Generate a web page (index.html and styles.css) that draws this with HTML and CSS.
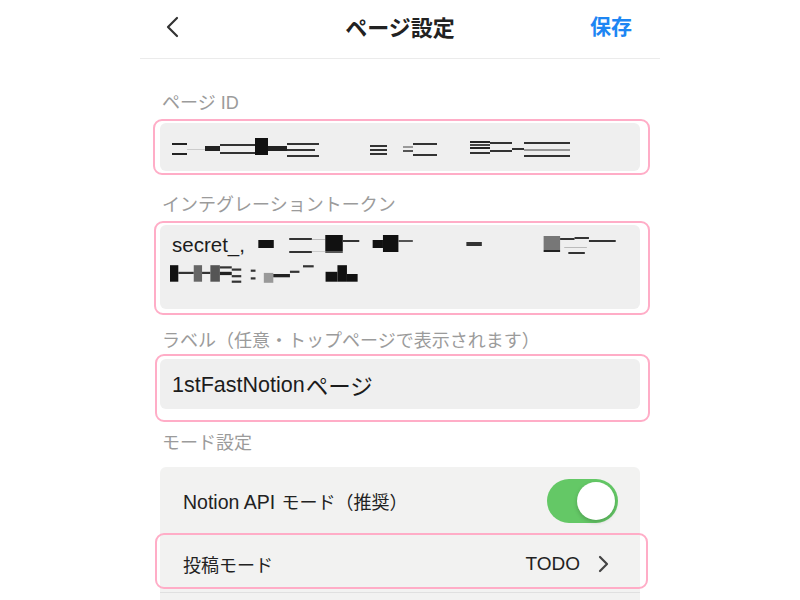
FILE: index.html
```html
<!DOCTYPE html>
<html lang="ja">
<head>
<meta charset="utf-8">
<title>ページ設定</title>
<link rel="stylesheet" href="styles.css">
</head>
<body>
<div class="screen">
  <header class="nav">
    <svg class="back" width="14" height="22" viewBox="0 0 14 22"><polyline points="12,2 3,11 12,20" fill="none" stroke="#333" stroke-width="2.2" stroke-linecap="round" stroke-linejoin="round"/></svg>
    <h1 class="title">ページ設定</h1>
    <span class="save">保存</span>
  </header>

  <main class="content">
    <div class="label label-first">ページ ID</div>
    <div class="mark mark-id">
      <div class="field field-id">
        <svg width="400" height="20" viewBox="0 0 400 20">
          <rect x="0" y="6" width="15" height="2" fill="#222"/><rect x="0" y="16" width="15" height="2" fill="#222"/>
          <rect x="15" y="12" width="18" height="1" fill="#ccc"/>
          <rect x="33" y="9" width="15" height="5" fill="#222"/>
          <rect x="48" y="7" width="35" height="2" fill="#333"/><rect x="48" y="15" width="35" height="2" fill="#333"/>
          <rect x="83" y="1" width="13" height="17" fill="#111"/>
          <rect x="96" y="9" width="19" height="5" fill="#222"/>
          <rect x="115" y="6" width="16" height="2" fill="#333"/><rect x="115" y="12" width="28" height="2" fill="#333"/><rect x="115" y="18" width="32" height="2" fill="#333"/>
          <rect x="131" y="6" width="16" height="2" fill="#333"/>
          <rect x="198" y="8" width="17" height="2" fill="#333"/><rect x="198" y="12" width="17" height="2" fill="#333"/><rect x="198" y="16" width="17" height="2" fill="#333"/>
          <rect x="231" y="9" width="10" height="2" fill="#999"/><rect x="231" y="13" width="10" height="2" fill="#555"/>
          <rect x="241" y="6" width="24" height="2" fill="#333"/><rect x="241" y="17" width="24" height="2" fill="#333"/>
          <rect x="298" y="4" width="20" height="2" fill="#222"/><rect x="298" y="7" width="20" height="2" fill="#444"/><rect x="298" y="10" width="20" height="2" fill="#222"/><rect x="298" y="15" width="20" height="2" fill="#333"/>
          <rect x="318" y="5" width="22" height="2" fill="#333"/><rect x="318" y="13" width="22" height="2" fill="#333"/>
          <rect x="340" y="11" width="12" height="2" fill="#333"/>
          <rect x="352" y="5" width="46" height="2" fill="#333"/><rect x="352" y="12" width="46" height="2" fill="#999"/><rect x="352" y="18" width="46" height="2" fill="#333"/>
        </svg>
      </div>
    </div>

    <div class="label">インテグレーショントークン</div>
    <div class="mark mark-token">
      <div class="field field-token">
        <div class="token-line"><span class="token-text">secret_,</span>
          <svg width="385" height="20" viewBox="0 0 370 20" preserveAspectRatio="none">
            <rect x="11" y="5" width="15" height="8" fill="#111"/>
            <rect x="41" y="3" width="22" height="2" fill="#333"/><rect x="41" y="16" width="22" height="2" fill="#333"/>
            <rect x="63" y="4" width="13" height="1" fill="#bbb"/><rect x="63" y="16" width="13" height="1" fill="#ccc"/>
            <rect x="76" y="0" width="17" height="16" fill="#111"/><rect x="76" y="16" width="17" height="2" fill="#555"/>
            <rect x="93" y="5" width="16" height="2" fill="#333"/>
            <rect x="122" y="5" width="10" height="8" fill="#111"/><rect x="132" y="0" width="15" height="17" fill="#111"/><rect x="147" y="5" width="14" height="2" fill="#555"/>
            <rect x="213" y="7" width="15" height="4" fill="#333"/>
            <rect x="288" y="1" width="16" height="14" fill="#777"/><rect x="288" y="15" width="16" height="2" fill="#222"/>
            <rect x="304" y="3" width="14" height="2" fill="#333"/><rect x="318" y="2" width="14" height="2" fill="#333"/><rect x="332" y="5" width="26" height="2" fill="#333"/>
            <rect x="308" y="12" width="22" height="1" fill="#bbb"/><rect x="312" y="17" width="16" height="2" fill="#333"/>
          </svg>
        </div>
        <div class="token-line">
          <svg width="190" height="22" viewBox="0 0 160 20" preserveAspectRatio="none">
            <rect x="0" y="2" width="7" height="15" fill="#111"/><rect x="7" y="8" width="13" height="2" fill="#333"/>
            <rect x="20" y="2" width="7" height="15" fill="#666"/><rect x="27" y="8" width="7" height="2" fill="#333"/>
            <rect x="34" y="2" width="8" height="15" fill="#555"/><rect x="42" y="3" width="10" height="2" fill="#333"/><rect x="42" y="8" width="10" height="3" fill="#222"/>
            <rect x="52" y="5" width="8" height="2" fill="#333"/><rect x="52" y="11" width="8" height="2" fill="#333"/><rect x="52" y="16" width="8" height="2" fill="#333"/>
            <rect x="68" y="6" width="4" height="2" fill="#333"/><rect x="68" y="13" width="4" height="2" fill="#333"/>
            <rect x="79" y="9" width="8" height="9" fill="#999"/><rect x="87" y="10" width="14" height="3" fill="#222"/><rect x="101" y="7" width="8" height="2" fill="#333"/>
            <rect x="112" y="2" width="9" height="2" fill="#333"/>
            <rect x="131" y="8" width="10" height="9" fill="#111"/><rect x="141" y="2" width="8" height="15" fill="#111"/><rect x="149" y="10" width="9" height="7" fill="#111"/>
          </svg>
        </div>
      </div>
    </div>

    <div class="label label-third">ラベル（任意・トップページで表示されます）</div>
    <div class="mark mark-label">
      <div class="field field-label">1stFastNotion<span class="jp">ページ</span></div>
    </div>

    <div class="label label-mode">モード設定</div>
    <div class="card">
      <div class="row row-toggle">
        <span class="row-text row-text-api">Notion API <span class="jp">モード（推奨）</span></span>
        <span class="switch"><span class="knob"></span></span>
      </div>
      <div class="row row-post">
        <span class="row-text">投稿モード</span>
        <span class="row-value">TODO
          <svg class="chev" width="12" height="18" viewBox="0 0 12 18"><polyline points="2,2 9,9 2,16" fill="none" stroke="#444" stroke-width="2.2" stroke-linecap="round" stroke-linejoin="round"/></svg>
        </span>
      </div>
      <div class="row row-next"></div>
    </div>
  </main>
</div>
</body>
</html>
```

FILE: styles.css
```css
* { box-sizing: border-box; }

html, body {
  margin: 0;
  padding: 0;
  background: #ffffff;
  font-family: "Liberation Sans", "Noto Sans CJK JP", sans-serif;
  color: #1c1c1c;
  overflow: hidden;
}

.screen {
  width: 520px;
  margin: 0 auto;
  height: 600px;
}

.nav {
  height: 59px;
  border-bottom: 1px solid #ebebeb;
  display: flex;
  align-items: center;
  justify-content: space-between;
  padding: 0 28px 4px 25px;
  position: relative;
}

.back { display: block; }

.title {
  position: absolute;
  left: 0;
  right: 0;
  top: 0;
  margin: 0;
  text-align: center;
  line-height: 52px;
  font-size: 22px;
  font-weight: 700;
  color: #222;
  font-family: "Noto Sans CJK JP", sans-serif;
  pointer-events: none;
}

.save {
  font-size: 21px;
  font-weight: 700;
  color: #1d86f3;
  font-family: "Noto Sans CJK JP", sans-serif;
  margin-top: -4px;
}

.content {
  padding: 0 20px;
}

.label {
  font-family: "Liberation Sans", "Noto Sans CJK JP", sans-serif;
  font-size: 18px;
  line-height: 24px;
  height: 24px;
  color: #9b9b9b;
  padding-left: 2px;
  margin-top: 18px;
  white-space: nowrap;
}

.label-first { margin-top: 32px; }
.label-third { margin-top: 14px; }
.label-mode { margin-top: 9px; }

.mark {
  border: 2px solid #ffadc7;
  border-radius: 9px;
  background: #fff;
  margin: 4px -10px 0 -7px;
  padding: 2px 8px 2px 5px;
}

.mark-token { margin-left: -6px; padding: 2px 8px 4px 4px; }
.mark-label { margin-left: -5px; padding: 3px 8px 11px 3px; margin-top: 1px; }

.field {
  background: #efefef;
  border-radius: 6px;
  padding: 0 12px;
  font-size: 20px;
  color: #1c1c1c;
}

.field-id {
  height: 48px;
  display: flex;
  align-items: center;
}
.field-id svg { display: block; }

.field-token {
  height: 84px;
  padding-top: 6px;
}

.token-line {
  height: 28px;
  display: flex;
  align-items: center;
}
.token-line svg { display: block; }
.token-line:last-child { margin-left: -2px; margin-top: 1px; }

.token-text {
  font-size: 20.5px;
  margin-right: 2px;
}

.field-label {
  height: 50px;
  display: flex;
  align-items: center;
  font-size: 21.5px;
  padding-top: 2px;
  white-space: nowrap;
}

.field-label .jp {
  font-size: 22.5px;
  margin-left: 1px;
}

.card {
  margin-top: 12px;
  background: #f2f2f1;
  border-radius: 6px 6px 0 0;
}

.row {
  display: flex;
  align-items: center;
  justify-content: space-between;
  padding: 0 22px 0 23px;
  font-size: 18px;
  color: #222;
}

.row-text { font-family: "Liberation Sans", "Noto Sans CJK JP", sans-serif; white-space: nowrap; }
.row-text-api { font-size: 19.5px; }
.row-text-api .jp { font-size: 18px; margin-left: 1px; }

.row-toggle { height: 67px; }

.row-post {
  height: 59px;
  border-top: 1px solid #e3e3e3;
  border-bottom: 1px solid #e0e0e0;
  position: relative;
  padding-right: 30px;
}

.row-post::after {
  content: "";
  position: absolute;
  top: -2px;
  left: -5px;
  right: -8px;
  bottom: 3px;
  border: 2px solid #ffadc7;
  border-radius: 9px;
  pointer-events: none;
}

.row-value {
  display: flex;
  align-items: center;
  gap: 18px;
  font-size: 19px;
  color: #222;
}
.chev { display: block; }

.row-next { height: 20px; }

.switch {
  width: 71px;
  height: 44px;
  border-radius: 22px;
  background: #64c866;
  position: relative;
  display: block;
}

.knob {
  position: absolute;
  top: 3px;
  right: 3px;
  width: 38px;
  height: 38px;
  border-radius: 50%;
  background: #fff;
  box-shadow: 0 2px 4px rgba(0,0,0,0.2);
}
```
